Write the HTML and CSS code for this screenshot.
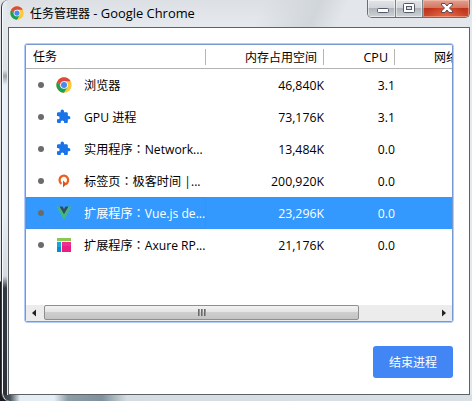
FILE: index.html
```html
<!DOCTYPE html>
<html lang="zh-CN">
<head>
<meta charset="utf-8">
<title>任务管理器 - Google Chrome</title>
<link rel="stylesheet" href="styles.css">
</head>
<body>
<svg class="defs" width="0" height="0">
  <symbol id="chrome" viewBox="0 0 48 48">
    <circle cx="24" cy="24" r="23" fill="#fbc934"/>
    <path d="M4.1 12.5 14 29.7 24 24V12.5L43.9 12.5A23 23 0 0 0 4.1 12.5Z" fill="#dd4b3e"/>
    <path d="M4.1 12.5A23 23 0 0 0 24 47L34 29.7 24 24 14 29.7Z" fill="#1a9f5b"/>
    <circle cx="24" cy="24" r="11.5" fill="#fff"/>
    <circle cx="24" cy="24" r="9" fill="#4688f4"/>
  </symbol>
  <symbol id="puzzle" viewBox="0.500 0 25 25">
    <path fill="#1a73e8" d="M20.500 11H19V7c0-1.100-.9-2-2-2h-4V3.500a2.700 2.700 0 0 0-5.400 0V5H4c-1.100 0-2 .9-2 2v3.800h1.500a2.700 2.700 0 0 1 0 5.400H2V20c0 1.100.9 2 2 2h3.800v-1.500a2.700 2.700 0 0 1 5.400 0V22H17c1.100 0 2-.9 2-2v-4h1.500a2.500 2.500 0 0 0 0-5z"/>
  </symbol>
</svg>
<div class="window">
  <header class="titlebar">
    <svg class="app-icon"><use href="#chrome"/></svg>
    <h1>任务管理器<span> - Google Chrome</span></h1>
    <div class="controls">
      <span class="ctl"><svg width="27" height="17"><rect x="9.500" y="8.500" width="11" height="4" rx="1" fill="#fff" stroke="#55586a"/></svg></span>
      <span class="ctl"><svg width="26" height="17"><rect x="7.500" y="3.500" width="11" height="9" rx="1" fill="#fff" stroke="#55586a"/><rect x="10.500" y="6.500" width="5" height="3" fill="#ddd" stroke="#55586a"/></svg></span>
      <span class="ctl close"><svg width="46" height="17"><path d="M18.500 3.500h3.500l2 2.500 2-2.500h3.500v1.500l-3 3 3 3v1.500h-3.500l-2-2.500-2 2.500h-3.500V11l3-3-3-3z" fill="#fff" stroke="#5c4850"/></svg></span>
    </div>
  </header>
  <main class="client">
    <section class="list">
      <div class="row head">
        <span class="task">任务</span><span class="mem">内存占用空间</span><span class="cpu">CPU</span><span class="net">网络</span>
      </div>
      <div class="rows">
        <div class="row"><span class="task"><i></i><svg><use href="#chrome"/></svg><span>浏览器</span></span><span class="mem">46,840K</span><span class="cpu">3.1</span></div>
        <div class="row"><span class="task"><i></i><svg><use href="#puzzle"/></svg><span>GPU 进程</span></span><span class="mem">73,176K</span><span class="cpu">3.1</span></div>
        <div class="row"><span class="task"><i></i><svg><use href="#puzzle"/></svg><span>实用程序<em lang="zh-TW">：</em>Network...</span></span><span class="mem">13,484K</span><span class="cpu">0.0</span></div>
        <div class="row"><span class="task"><i></i><svg viewBox="0 0 16 16"><path d="M5.500 10.800A4.300 4.500 0 1 1 9.500 11.200" fill="none" stroke="#eb6020" stroke-width="2.300"/><path d="M7 7.500 10.500 11 7 14.500Z" fill="#d9501a"/></svg><span>标签页<em lang="zh-TW">：</em>极客时间 |...</span></span><span class="mem">200,920K</span><span class="cpu">0.0</span></div>
        <div class="row selected"><span class="task"><i></i><svg viewBox="0 0 16 16"><path d="M.5 1.500H4L8 8.500l4-7h3.500L8 15Z" fill="#41b883"/><path d="M3.500 1.500h3L8 4l1.500-2.500h3L8 9.300Z" fill="#35495e"/></svg><span>扩展程序<em lang="zh-TW">：</em>Vue.js de...</span></span><span class="mem">23,296K</span><span class="cpu">0.0</span></div>
        <div class="row"><span class="task"><i></i><svg viewBox="0 0 16 16"><path d="M1 1h14v3H1z" fill="#8cc751"/><path d="M1 5h4v5H1z" fill="#16a5df"/><path d="M1 10h4v5H1z" fill="#0b8bd0"/><path d="M6 5h9v4H6z" fill="#f02b91"/><path d="M6 9h9v6H6z" fill="#e91e83"/><path d="M5 5h1v10H5zM1 4h14v1H1z" fill="#f7e6ef"/></svg><span>扩展程序<em lang="zh-TW">：</em>Axure RP...</span></span><span class="mem">21,176K</span><span class="cpu">0.0</span></div>
      </div>
      <div class="scrollbar">
        <svg class="arrow" width="18" height="16"><path d="M10 4.500v7L6 8Z" fill="#222"/></svg>
        <div class="thumb"><b></b><b></b><b></b></div>
        <svg class="arrow end" width="18" height="16"><path d="M8 4.500v7L12 8Z" fill="#222"/></svg>
      </div>
    </section>
    <button>结束进程</button>
  </main>
</div>
</body>
</html>
```
FILE: styles.css
```css
* { box-sizing: border-box; }
body {
  margin: 0;
  width: 472px;
  height: 401px;
  overflow: hidden;
  padding-left: 1px;
  background: linear-gradient(#dfe3e7 0, #e4e7ea 281px, #17191c 282px);
  font: 12px/16px "Open Sans", "Noto Sans CJK SC", sans-serif;
  color: #000;
}
.defs { position: absolute; }
.window {
  width: 471px;
  height: 401px;
  padding: 0 2px 0 6px;
  border-left: 1px solid #353940;
  border-radius: 7px 0 0 8px;
  box-shadow: inset 1px 0 #f8fafb;
  background:
    linear-gradient(90deg, #353b43 0, #46505a 8px, #e5eef5 18px, #e5eef5 52px, #8d9da8 66px, #7f919c 100px, #d5dde3 125px, #d9e0e5 100%) 0 395px / 100% 6px no-repeat,
    linear-gradient(#e5eaee 0, #dde3e8 70px, #9da3a9 76px, #e7f0f8 85px, #e7f0f8 210px, #d4dbe0 276px, #343a42 288px, #2b3037 100%) 0 0 / 5px 100% no-repeat,
    linear-gradient(#dce0e4, #e6eaee 27px, #dfe7ee);
}
.titlebar {
  display: flex;
  height: 27px;
  padding-left: 2px;
  background: linear-gradient(115deg, transparent 54%, #d1d6da 66%, #e3e7eb 72%);
}
.app-icon { width: 14px; height: 14px; margin: 6px 6px 0 0; }
h1 { margin: 5px 0 0; font-size: 12px; font-weight: 400; line-height: 17px; white-space: pre; }
h1 span { font-size: 12.900px; }
.controls {
  display: flex;
  width: 103px;
  height: 18px;
  margin-left: auto;
  margin-right: 0;
  border: 1px solid #696d76;
  border-top: 0;
  border-radius: 0 0 5px 5px;
  overflow: hidden;
}
.ctl {
  height: 17px;
  width: 28px;
  border-right: 1px solid #7c8087;
  box-shadow: inset 0 0 0 1px rgba(255,255,255,.5);
  background: linear-gradient(#e2e5e8 0, #d2d5d9 45%, #b1b5bb 50%, #ced3d8 100%);
}
.ctl + .ctl { width: 27px; }
.ctl svg { display: block; }
.ctl.ctl.close {
  width: 46px;
  border-right: 0;
  box-shadow: inset 0 0 0 1px rgba(255,210,195,.45);
  background: radial-gradient(ellipse at 50% 100%, rgba(255,125,80,.6), transparent 60%), linear-gradient(#e2a190 0, #d47762 45%, #bd3219 50%, #cb4d31 100%);
}
.client {
  display: flex;
  flex-direction: column;
  height: 368px;
  width: 462px;
  padding: 15px 15px 0;
  border: 1px solid #5e6265;
  background: #fff;
}
.list {
  width: 430px;
  height: 280px;
  border: 1px solid #b3cdf8;
  border-radius: 3px;
  box-shadow: inset 0 0 0 1px #7698d3;
  padding: 1px;
  display: flex;
  flex-direction: column;
}
.row { display: flex; height: 32px; line-height: 34px; white-space: nowrap; }
.row > span { flex: none; }
.head { height: 24px; line-height: 26px; border-bottom: 1px solid #b3b3b3; overflow: hidden; }
.task { width: 180px; display: flex; align-items: center; }
.task span { font-size: 12.150px; padding-top: 1px; }
.task em { font-family: "Noto Sans CJK TC", sans-serif; font-style: normal; line-height: 1; }
.head .task { padding-left: 7px; }
.mem { width: 118px; text-align: right; }
.cpu { width: 71px; text-align: right; }
.rows .mem { font-size: 12.300px; }
.rows .cpu { font-size: 12.200px; }
.head .cpu { font-size: 12.500px; }
.head .task, .head .mem, .head .cpu {
  padding-right: 7px;
  background: linear-gradient(#b5b5b5, #b5b5b5) right 4px / 1px 16px no-repeat;
}
.net { margin-left: 39px; }
.task i { width: 6px; height: 6px; border-radius: 50%; background: #6b6b6b; margin: 0 12px; }
.task svg { width: 16px; height: 16px; margin-right: 12px; }
.rows { flex: 1; }
.selected { background: #3399ff; color: #fff; }
.selected .task { box-shadow: inset 0 0 0 1px #4090e8; border-radius: 2px; height: 32px; }
.scrollbar { display: flex; height: 16px; background: #ececec; }
.thumb {
  width: 315px;
  height: 15px;
  border: 1px solid #8e8e8e;
  border-radius: 2px;
  background: linear-gradient(#f3f3f3 0, #e4e4e4 45%, #cecece 50%, #c4c4c4 100%);
  display: flex;
  justify-content: center;
  align-items: center;
  gap: 1px;
}
.thumb b { width: 2px; height: 7px; background: linear-gradient(90deg, #555, #aaa); }
.arrow.end { margin-left: auto; }
button {
  align-self: flex-end;
  width: 80px;
  height: 32px;
  margin: 23px 1px 0 0;
  padding: 2px 0 0;
  border: 0;
  border-radius: 3px;
  background: #4285f4;
  color: #fff;
  font: inherit;
}
```
